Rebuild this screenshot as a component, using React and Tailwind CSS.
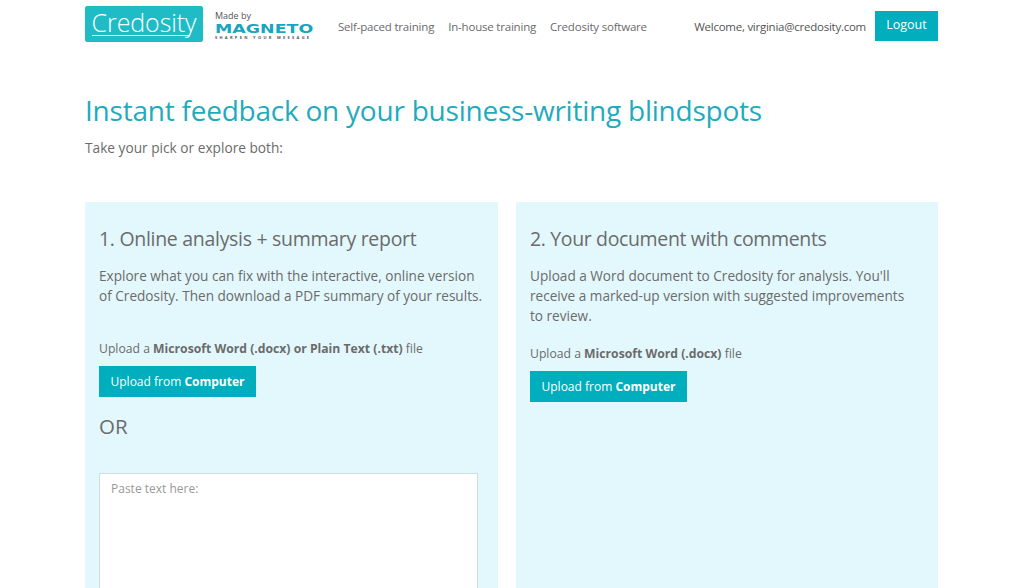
export default function App() {
  return (
    <div className="h-[588px] overflow-hidden bg-white text-[#6b6b6b] font-['Open_Sans',sans-serif]">
      <div className="mx-[85px] w-[853px]">
        <header className="flex items-start h-[202px] flex-col">
          <div className="flex items-center w-full h-[53px]">
            <div className="relative w-[118px] h-[36px] mt-[-5px] bg-[#1fbcc6] rounded-[2px] flex justify-center">
              <span className="text-white text-[25px] leading-[33px] font-light tracking-[-0.1px]">Credosity</span>
              <div className="absolute left-[7px] bottom-[6px] w-[98px] h-px bg-white" />
            </div>
            <div className="ml-[12px] w-[97px] mt-[-3px]">
              <div className="text-[9px] leading-[11px] text-[#555]">Made by</div>
              <div className="text-[13px] leading-[12px] mt-[2px] font-bold text-[#18a5c0] font-['DejaVu_Sans',sans-serif] scale-x-[1.34] origin-left">MAGNETO</div>
              <div className="text-[4px] leading-[6px] tracking-[2.3px] font-bold text-[#555] whitespace-nowrap">SHARPEN YOUR MESSAGE</div>
            </div>
            <nav className="flex ml-[26px] gap-[14px] text-[11.5px] tracking-[-0.2px] text-[#6b6b6b] mt-[1px]">
              <a>Self-paced training</a>
              <a>In-house training</a>
              <a>Credosity software</a>
            </nav>
            <div className="ml-auto flex items-center mt-[-2px]">
              <span className="text-[11.5px] tracking-[-0.25px] text-[#555] mr-[9px] mt-[2px]">Welcome, virginia@credosity.com</span>
              <button className="w-[63px] h-[30px] bg-[#00aebd] text-white text-[12.5px]">Logout</button>
            </div>
          </div>
          <h1 className="text-[#1fabbd] text-[28px] tracking-[-0.23px] leading-[38px] mt-[38px]">Instant feedback on your business-writing blindspots</h1>
          <p className="text-[13.7px] leading-[20px] mt-[9px]">Take your pick or explore both:</p>
        </header>
        <div className="flex gap-[18px]">
          <section className="w-[413px] h-[400px] bg-[#e3f8fd] px-[14px] pt-[23px]">
            <h2 className="text-[19.5px] tracking-[-0.3px] leading-[27px]">1. Online analysis + summary report</h2>
            <p className="text-[13.6px] leading-[20px] mt-[14px]">Explore what you can fix with the interactive, online version of Credosity. Then download a PDF summary of your results.</p>
            <p className="text-[12.2px] leading-[16px] mt-[35px]">Upload a <b>Microsoft Word (.docx) or Plain Text (.txt)</b> file</p>
            <button className="block w-[157px] h-[31px] mt-[9px] bg-[#00aebd] text-white text-[12px]">Upload from <b>Computer</b></button>
            <div className="text-[20.5px] leading-[27px] mt-[16px]">OR</div>
            <div className="w-[379px] h-[200px] mt-[33px] bg-white border border-[#d3dcdf] px-[11px] py-[7px] text-[12px] leading-[16px] text-[#999]">Paste text here:</div>
          </section>
          <section className="w-[422px] h-[400px] bg-[#e3f8fd] px-[14px] pt-[23px]">
            <h2 className="text-[19.5px] tracking-[-0.36px] leading-[27px]">2. Your document with comments</h2>
            <p className="text-[13.6px] leading-[20px] mt-[14px] max-w-[385px]">Upload a Word document to Credosity for analysis. You'll receive a marked-up version with suggested improvements to review.</p>
            <p className="text-[12.2px] leading-[16px] mt-[20px]">Upload a <b>Microsoft Word (.docx)</b> file</p>
            <button className="block w-[157px] h-[31px] mt-[9px] bg-[#00aebd] text-white text-[12px]">Upload from <b>Computer</b></button>
          </section>
        </div>
      </div>
    </div>
  );
}
